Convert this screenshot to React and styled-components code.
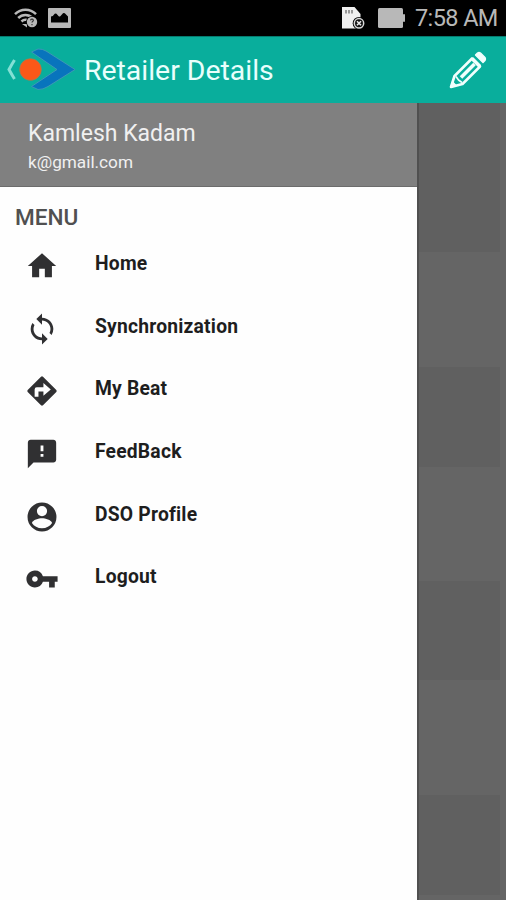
import styled, { createGlobalStyle } from 'styled-components';
import { MdHome, MdLoop, MdFeedback, MdVpnKey } from 'react-icons/md';

const GlobalStyle = createGlobalStyle`
  * {
    box-sizing: border-box;
  }
  body {
    margin: 0;
    font-family: Roboto, 'Liberation Sans', sans-serif;
    background: #656565;
  }
`;

const Screen = styled.div`
  width: 506px;
  height: 900px;
  display: flex;
  flex-direction: column;
  overflow: hidden;
`;

const StatusBar = styled.div`
  flex: none;
  height: 36px;
  padding: 0 9px 0 14px;
  display: flex;
  align-items: center;
  background: #000;
  color: #b8b8b8;
  svg {
    flex: none;
    display: block;
  }
`;

const StatusGroup = styled.div`
  display: flex;
  align-items: center;
  gap: ${({ $gap }) => $gap}px;
  margin-left: ${({ $end }) => ($end ? 'auto' : 0)};
`;

const Clock = styled.span`
  width: 82px;
  margin-left: -3px;
  font-size: 23.5px;
  line-height: 36px;
  letter-spacing: -0.6px;
  white-space: nowrap;
`;

const AppBar = styled.header`
  flex: none;
  height: 67px;
  padding: 0 19px 0 6px;
  display: flex;
  align-items: center;
  background: #09ae9c;
  border-top: 1px solid #067c70;
  color: #e9fffc;
  svg {
    flex: none;
    display: block;
  }
`;

const Title = styled.h1`
  flex: 1;
  margin: 2px 0 0 8px;
  font-size: 28.4px;
  font-weight: 400;
  line-height: 34px;
  white-space: nowrap;
`;

const Body = styled.div`
  flex: 1;
  display: flex;
  min-height: 0;
`;

const Drawer = styled.nav`
  width: 417px;
  background: #fefefe;
`;

const Account = styled.div`
  height: 84px;
  padding: 17px 28px 0;
  background: #808080;
  border-bottom: 1px solid #6c6c6c;
  color: #f0f0f0;
`;

const AccountName = styled.div`
  font-size: 23px;
  line-height: 28px;
`;

const AccountMail = styled.div`
  margin-top: 4px;
  font-size: 17.2px;
  line-height: 20px;
`;

const MenuTitle = styled.h2`
  margin: 17px 0 0 15px;
  font-size: 22.6px;
  font-weight: 500;
  line-height: 28px;
  color: #505050;
`;

const MenuList = styled.ul`
  margin: 3px 0 0;
  padding: 0;
  list-style: none;
`;

const MenuItem = styled.li`
  height: 62.6px;
  padding-left: 25px;
  display: flex;
  align-items: center;
  color: #303032;
  svg {
    flex: none;
    width: 34px;
    height: 34px;
  }
`;

const MenuLabel = styled.span`
  margin: -4px 0 0 36px;
  font-size: 19.3px;
  font-weight: 700;
  line-height: 24px;
  letter-spacing: 0.2px;
  color: #1e1e1e;
`;

const Backdrop = styled.div`
  flex: 1;
  padding-right: 6px;
  display: flex;
  flex-direction: column;
  background: #656565;
  border-left: 2px solid #505050;
`;

const Card = styled.div`
  flex: none;
  height: ${({ $height }) => $height}px;
  margin-bottom: ${({ $after }) => $after}px;
  background: #606060;
`;

function AccountIcon() {
  return (
    <svg viewBox="0 0 24 24" fill="currentColor">
      <path
        fillRule="evenodd"
        d="M12 1.800a10.200 10.200 0 1 0 0 20.400a10.200 10.200 0 1 0 0-20.400zM12 4.200a3.600 3.600 0 1 1 0 7.200a3.600 3.600 0 1 1 0-7.200zM12 19.900c-3 0-5.700-1.400-7.100-3.700.6-2.200 4.700-3.300 7.100-3.300s6.500 1.100 7.100 3.300c-1.400 2.300-4.100 3.700-7.100 3.700z"
      />
    </svg>
  );
}

function DirectionsIcon() {
  return (
    <svg viewBox="0 0 24 24" fill="currentColor">
      <path
        fillRule="evenodd"
        d="M12 1.600q.4 0 .7.300l9.400 9.400q.6.700 0 1.400l-9.400 9.400q-.7.600-1.400 0L1.900 12.700q-.6-.7 0-1.400L11.300 1.900q.3-.3.700-.3zM6.800 16h2.700v-3.600h3.500v3l5.200-4.500-5.200-4.500v3H8.300q-1.500 0-1.500 1.500z"
      />
    </svg>
  );
}

function WifiIcon() {
  return (
    <svg width="24" height="20" viewBox="0 0 24 20" fill="none">
      <g stroke="currentColor" strokeWidth="2.500">
        <path d="M1 6.200C7 .2 16 .2 22 6.200" />
        <path d="M4.200 10c4-4 10.400-4 14.500 0" />
        <path d="M7.500 13.500c2-2 5-2.200 7.500-.8" />
      </g>
      <path d="M8 16h5v3.500z" fill="currentColor" />
      <circle cx="18" cy="14" r="6" fill="#000" />
      <circle cx="18" cy="14" r="5.200" fill="currentColor" />
      <path d="M16.500 12.300c.3-1.800 3.200-1.500 2.800.3-.2.800-1.300.9-1.300 2M18 16v1.200" stroke="#333" strokeWidth="1.200" />
    </svg>
  );
}

function PictureIcon() {
  return (
    <svg width="23" height="20" viewBox="0 0 23 20">
      <path
        fill="currentColor"
        fillRule="evenodd"
        d="M1 0h21Q23 0 23 1v18Q23 20 22 20H1Q0 20 0 19V1Q0 0 1 0zM3 14.500h17V8.500l-3.200-3.200q-1-.6-1.800 0l-2.700 2.900q-.8.700-1.600 0L8.500 5.800q-1-.7-1.800 0L4.800 8 3 8.500z"
      />
    </svg>
  );
}

function SimIcon() {
  return (
    <svg width="24" height="24" viewBox="0 0 24 24">
      <path d="M0 1h12.500l6 7v14.500H0z" fill="#f0f0f0" />
      <path d="M3 4h2v3.500H3zM6 4h2v3.500H6zM9 4h2v3.500H9z" fill="#999" />
      <circle cx="17" cy="17.300" r="6.300" fill="#000" />
      <circle cx="17" cy="17.300" r="4.700" fill="#111" stroke="#d8d8d8" strokeWidth="1.500" />
      <path d="M15 15.300l4 4M19 15.300l-4 4" stroke="#e8e8e8" strokeWidth="1.600" />
    </svg>
  );
}

function BatteryIcon() {
  return (
    <svg width="28" height="20" viewBox="0 0 28 20" fill="currentColor">
      <rect width="25" height="20" rx="1.500" />
      <rect x="25" y="6" width="2" height="8" rx="1" />
    </svg>
  );
}

function BackIcon() {
  return (
    <svg width="11" height="22" viewBox="0 0 11 22" fill="none">
      <path d="M8.500 1Q6 5 3 10.500Q6 16 8.500 20" stroke="#83e0d5" strokeWidth="3" />
    </svg>
  );
}

function Logo() {
  return (
    <svg width="59" height="44" viewBox="0 0 59 44">
      <path
        d="M14.500 4L21 1Q25.500.8 29 3L58 21.500L31 38.500Q26 41.700 21 41.500L14.500 38.500L40 21.500z"
        fill="#0874bd"
        stroke="#3b98b6"
        strokeWidth="1"
      />
      <circle cx="13.500" cy="21.500" r="10.800" fill="#fb5818" stroke="#a87b4e" strokeWidth="0.800" />
    </svg>
  );
}

function PencilIcon() {
  return (
    <svg width="38" height="38" viewBox="0 0 38 38" fill="none" stroke="#f1fffd" strokeLinejoin="round">
      <path d="M2 36L5.500 25L23 7.500L31 15.500L13.500 33z" strokeWidth="2.600" />
      <path d="M12 26.500L25.500 13" strokeWidth="3.600" />
      <path d="M7 25.500L9.500 29L13 31.500" strokeWidth="1.600" />
      <path d="M2 36l1.500-5 3.500 3.500z" fill="#f1fffd" strokeWidth="1.500" />
      <path d="M23 7.500L31 15.500" strokeWidth="3.600" />
      <path d="M26.500 4L28.500 2Q30 1 31.500 2L36 6.500Q37 8 36 9.500L34 11.500z" fill="#f1fffd" strokeWidth="1.400" />
    </svg>
  );
}

const items = [
  { label: 'Home', Icon: MdHome },
  { label: 'Synchronization', Icon: MdLoop },
  { label: 'My Beat', Icon: DirectionsIcon },
  { label: 'FeedBack', Icon: MdFeedback },
  { label: 'DSO Profile', Icon: AccountIcon },
  { label: 'Logout', Icon: MdVpnKey },
];

const cards = [
  { height: 149, after: 115 },
  { height: 100, after: 114 },
  { height: 99, after: 115 },
  { height: 100, after: 0 },
];

export default function App() {
  return (
    <>
      <GlobalStyle />
      <Screen>
        <StatusBar>
          <StatusGroup $gap={10}>
            <WifiIcon />
            <PictureIcon />
          </StatusGroup>
          <StatusGroup $end $gap={12}>
            <SimIcon />
            <BatteryIcon />
            <Clock>7:58 AM</Clock>
          </StatusGroup>
        </StatusBar>
        <AppBar>
          <BackIcon />
          <Logo />
          <Title>Retailer Details</Title>
          <PencilIcon />
        </AppBar>
        <Body>
          <Drawer>
            <Account>
              <AccountName>Kamlesh Kadam</AccountName>
              <AccountMail>k@gmail.com</AccountMail>
            </Account>
            <MenuTitle>MENU</MenuTitle>
            <MenuList>
              {items.map(({ label, Icon }) => (
                <MenuItem key={label}>
                  <Icon />
                  <MenuLabel>{label}</MenuLabel>
                </MenuItem>
              ))}
            </MenuList>
          </Drawer>
          <Backdrop>
            {cards.map(({ height, after }, i) => (
              <Card key={i} $height={height} $after={after} />
            ))}
          </Backdrop>
        </Body>
      </Screen>
    </>
  );
}
